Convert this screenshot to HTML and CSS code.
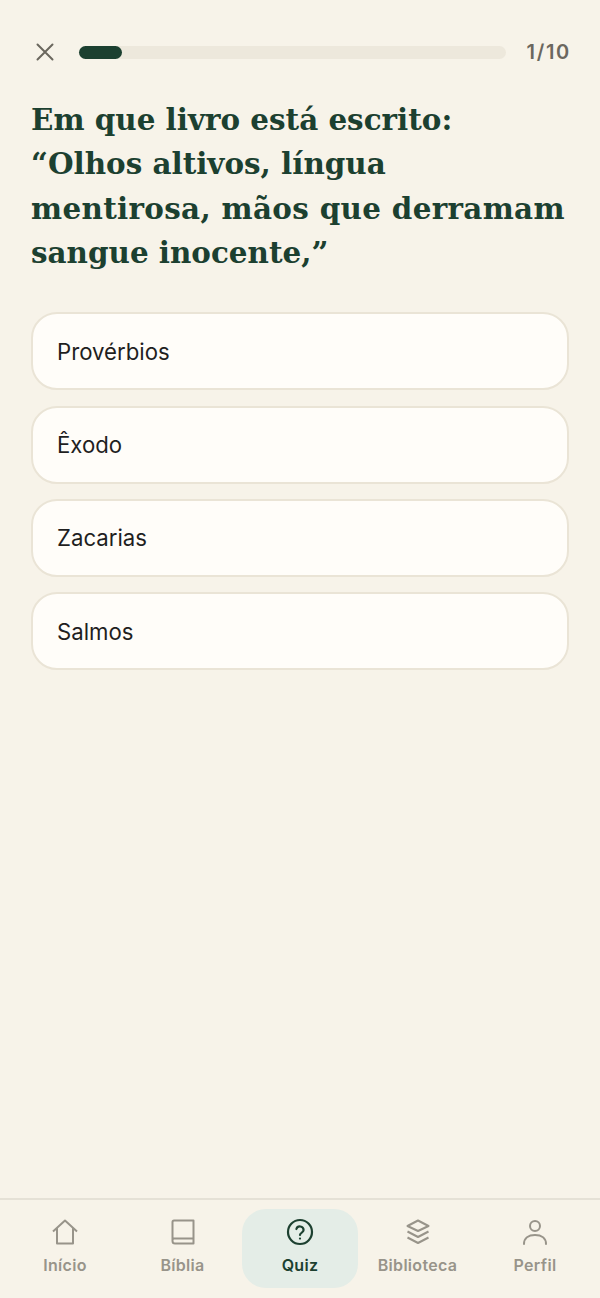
FILE: index.html
```html
<!DOCTYPE html>
<html lang="pt">
<head>
    <meta charset="UTF-8">
    <meta name="viewport" content="width=device-width, initial-scale=1.0">
    <title>Quiz</title>
    <link rel="stylesheet" href="styles.css">
</head>
<body>
    <div class="screen">
        <div class="top-bar">
            <svg class="close-icon" width="20" height="20" viewBox="0 0 20 20" fill="none" stroke="currentColor" stroke-width="2" stroke-linecap="round"><path d="M2.5 2.5l15 15M17.5 2.5l-15 15"/></svg>
            <div class="progress"><div class="progress-fill"></div></div>
            <span class="progress-label">1/10</span>
        </div>
        <h1 class="question">Em que livro está escrito:<br>“Olhos altivos, língua<br><span class="wide-line">mentirosa, mãos que derramam</span><br>sangue inocente,”</h1>
        <div class="options">
            <div class="option">Provérbios</div>
            <div class="option">Êxodo</div>
            <div class="option">Zacarias</div>
            <div class="option">Salmos</div>
        </div>
    </div>
    <div class="tab-bar">
        <div class="tab">
            <svg width="28" height="28" viewBox="0 0 28 28" fill="none" stroke="currentColor" stroke-width="2" stroke-linejoin="round"><path d="M2 13.5L14 2.5l12 11M6 10.500V25.500h16V10.500"/></svg>
            <span>Início</span>
        </div>
        <div class="tab">
            <svg width="28" height="28" viewBox="0 0 28 28" fill="none" stroke="currentColor" stroke-width="2" stroke-linejoin="round"><path d="M3.500 23V4a1.500 1.500 0 0 1 1.500-1.500h19.500v23H6a2.500 2.500 0 0 1-2.500-2.500zM3.500 22a1.500 1.500 0 0 1 1.500-1.500h19.500"/></svg>
            <span>Bíblia</span>
        </div>
        <div class="tab active">
            <svg width="28" height="28" viewBox="0 0 28 28" fill="none" stroke="currentColor" stroke-width="2.200" stroke-linecap="round"><circle cx="14" cy="14" r="12"/><path d="M10.400 11a3.700 3.700 0 0 1 7.200 1c0 2.400-3.600 3-3.600 5"/><path d="M14 20.500v.1"/></svg>
            <span>Quiz</span>
        </div>
        <div class="tab">
            <svg width="28" height="28" viewBox="0 0 28 28" fill="none" stroke="currentColor" stroke-width="2" stroke-linejoin="round"><path d="M14 2.500L24.500 8 14 13 3.500 8zM3.500 13.500L14 19l10.500-5.500M3.500 19.500L14 25l10.500-5.500"/></svg>
            <span>Biblioteca</span>
        </div>
        <div class="tab">
            <svg width="28" height="28" viewBox="0 0 28 28" fill="none" stroke="currentColor" stroke-width="2" stroke-linecap="round"><circle cx="14" cy="8" r="5"/><path d="M3 26c0-6 4.500-9 11-9s11 3 11 9"/></svg>
            <span>Perfil</span>
        </div>
    </div>
</body>
</html>
```

FILE: styles.css
```css
* {
    margin: 0;
    padding: 0;
    box-sizing: border-box;
}
body {
    width: 600px;
    height: 1298px;
    display: flex;
    flex-direction: column;
    font-family: Inter, "Liberation Sans", sans-serif;
    background-color: #f7f3e9;
    color: #1f1f1f;
    overflow: hidden;
}
.screen {
    flex: 1;
    padding: 42px 31px 0;
}
.top-bar {
    display: flex;
    align-items: center;
    height: 20px;
}
.close-icon {
    margin-left: 4px;
    color: #6b675e;
}
.progress {
    width: 427px;
    height: 13px;
    margin-left: 24px;
    background-color: #ede8dc;
    border-radius: 7px;
}
.progress-fill {
    width: 43px;
    height: 13px;
    background-color: #1c4030;
    border-radius: 7px;
}
.progress-label {
    margin-left: auto;
    margin-right: -2px;
    font-size: 20px;
    font-weight: 600;
    letter-spacing: 1.700px;
    color: #6b675e;
}
.question {
    margin-top: 36px;
    font-family: "DejaVu Serif", serif;
    font-size: 29.400px;
    font-weight: 700;
    line-height: 44.300px;
    color: #1c4030;
}
.wide-line {
    letter-spacing: 0.320px;
}
.options {
    display: flex;
    flex-direction: column;
    gap: 15.400px;
    margin-top: 37px;
}
.option {
    height: 78px;
    display: flex;
    align-items: center;
    padding-left: 24px;
    font-size: 22.200px;
    background-color: #fffdf9;
    border: 2px solid #eae4d6;
    border-radius: 26px;
}
.tab-bar {
    height: 100px;
    display: flex;
    justify-content: space-between;
    padding: 9px 7px 10px;
    border-top: 2px solid #e5e1d6;
}
.tab {
    width: 116px;
    display: flex;
    flex-direction: column;
    align-items: center;
    gap: 9px;
    padding-top: 9px;
    font-size: 16px;
    font-weight: 600;
    letter-spacing: 0.300px;
    color: #98948a;
    border-radius: 24px;
}
.tab.active {
    color: #1c4030;
    background-color: #e4ede7;
}
```
